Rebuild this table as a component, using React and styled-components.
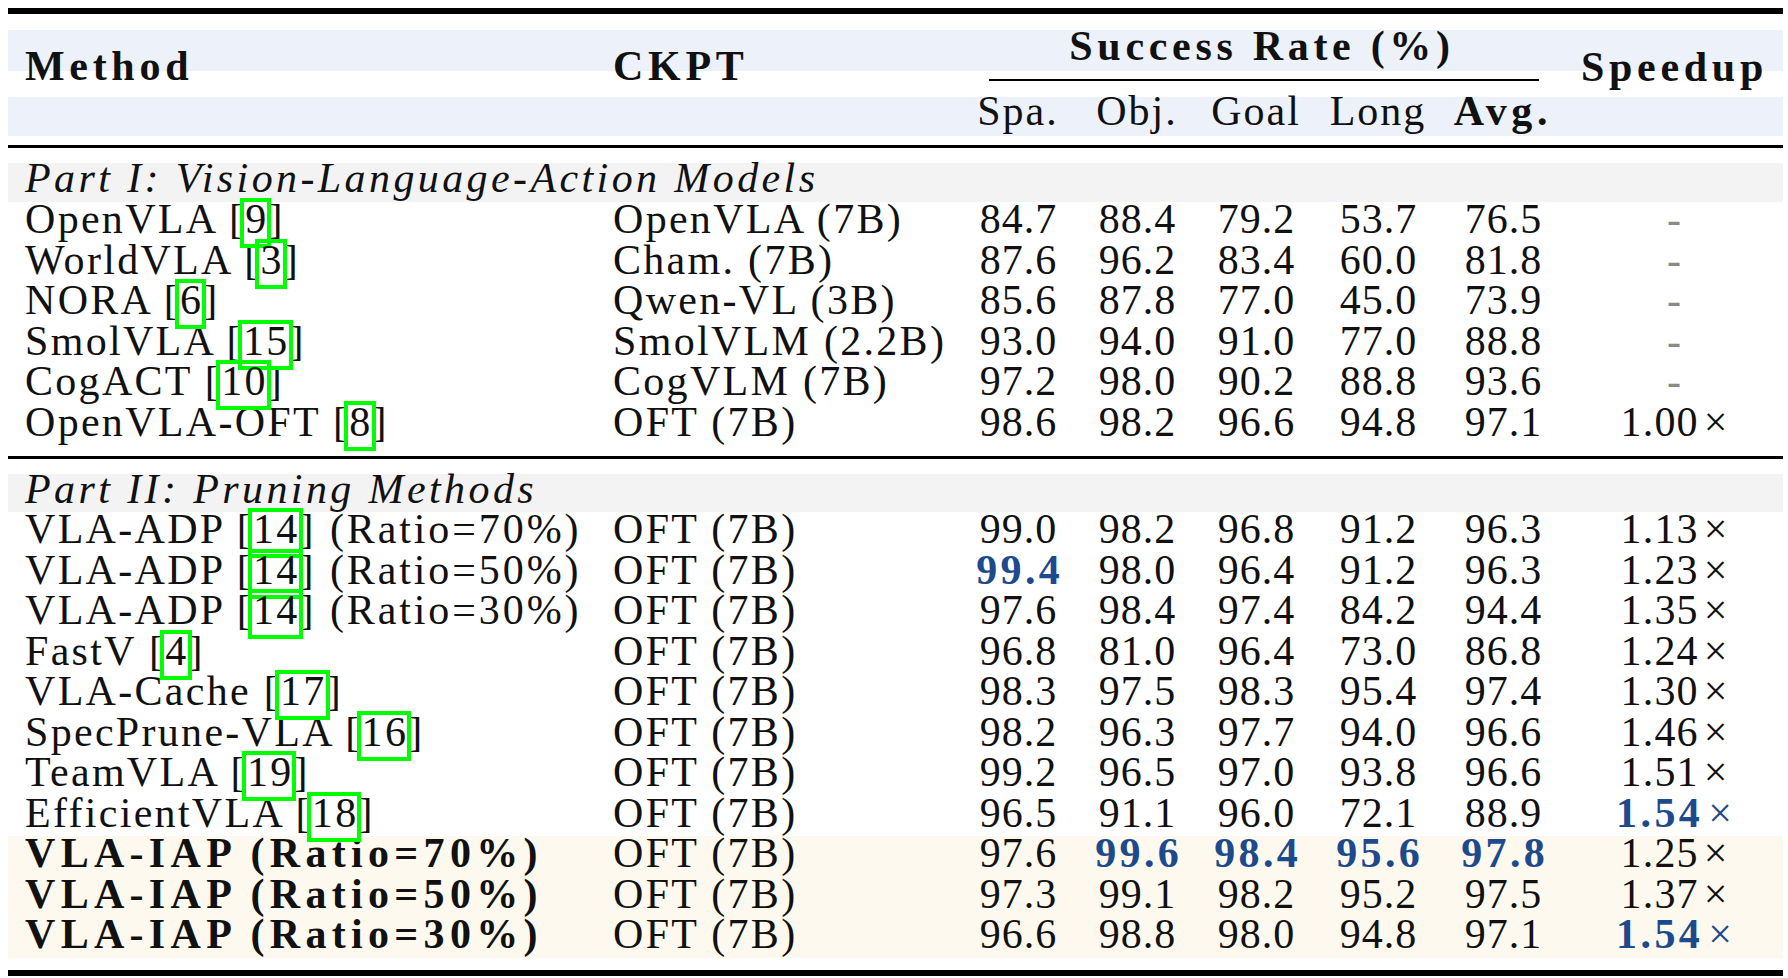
import React from 'react';
import styled, { createGlobalStyle } from 'styled-components';

const GlobalStyle = createGlobalStyle`
  html, body {
    margin: 0;
    padding: 0;
    background: #fff;
  }
  body {
    font-family: "Liberation Serif", "Times New Roman", serif;
    color: #111;
  }
`;

const COLS = '592px 358px 120px 118px 120px 124px 126px 217px';
const BLUE = '#1d4a8c';

const Table = styled.div`
  margin: 8px 0 0 8px;
  width: 1775px;
  display: flex;
  flex-direction: column;
  font-size: 42px;
`;

const Rule = styled.div`
  height: ${(p) => p.$h}px;
  background: #000;
  margin-top: ${(p) => p.$mt || 0}px;
  margin-bottom: ${(p) => p.$mb || 0}px;
`;

const Head = styled.div`
  display: grid;
  grid-template-columns: ${COLS};
  grid-template-rows: 16px 41px 26px 39px 9px;
`;

const HeadBand = styled.div`
  grid-column: 1 / -1;
  grid-row: ${(p) => p.$row};
  background: #edf2fa;
`;

const HeadCell = styled.div`
  grid-column: ${(p) => p.$col};
  grid-row: ${(p) => p.$row};
  line-height: 31px;
  margin-top: ${(p) => p.$mt || 0}px;
  padding-left: ${(p) => p.$pl || 0}px;
  text-align: ${(p) => p.$align || 'center'};
  font-weight: ${(p) => (p.$bold ? 700 : 400)};
  letter-spacing: ${(p) => (p.$bold ? 4.7 : 2)}px;
  white-space: nowrap;
`;

const CMidRule = styled.div`
  grid-column: 3 / 8;
  grid-row: 3;
  align-self: start;
  height: 2px;
  margin: 8px 27px 0 31px;
  background: #000;
`;

const PartBand = styled.div`
  height: ${(p) => p.$h}px;
  background: #f3f3f3;
  line-height: 30.7px;
  padding-left: 17px;
  font-style: italic;
  letter-spacing: 3.4px;
  white-space: nowrap;
`;

const Rows = styled.div`
  display: flex;
  flex-direction: column;
  background: ${(p) => (p.$hl ? '#fdf9ef' : 'transparent')};
`;

const Row = styled.div`
  display: grid;
  grid-template-columns: ${COLS};
  height: 40.5px;
  line-height: 35px;
`;

const MethodCell = styled.div`
  padding-left: 17px;
  white-space: nowrap;
  font-weight: ${(p) => (p.$bold ? 700 : 400)};
  letter-spacing: ${(p) => (p.$bold ? 5.3 : 2.3)}px;
`;

const Suffix = styled.span`
  margin-left: 14px;
  letter-spacing: 2.9px;
`;

const CkptCell = styled.div`
  padding-left: 13px;
  white-space: nowrap;
  letter-spacing: 2.3px;
`;

const Num = styled.div`
  text-align: center;
  white-space: nowrap;
  font-weight: ${(p) => (p.$best ? 700 : 400)};
  color: ${(p) => (p.$best ? BLUE : 'inherit')};
  letter-spacing: ${(p) => (p.$best ? 3.4 : 1)}px;
  padding-left: ${(p) => (p.$best ? 3.4 : 1)}px;
`;

const SpeedCell = styled.div`
  text-align: center;
  white-space: nowrap;
  letter-spacing: 1px;
  color: ${(p) => (p.$best ? BLUE : 'inherit')};
`;

const SpeedValue = styled.span`
  font-weight: ${(p) => (p.$best ? 700 : 400)};
  letter-spacing: ${(p) => (p.$best ? 3.4 : 1.2)}px;
`;

const Times = styled.span`
  margin-left: 5px;
  font-weight: 400;
`;

const Dash = styled.span`
  color: #8a8a8a;
`;

const Cite = styled.span`
  position: relative;
  &::after {
    content: '';
    position: absolute;
    left: -5px;
    right: -3px;
    top: 2px;
    bottom: -6px;
    border: 4px solid #00ff00;
  }
`;

const partOne = [
  { name: 'OpenVLA', cite: '9', ckpt: 'OpenVLA (7B)', nums: ['84.7', '88.4', '79.2', '53.7', '76.5'], speed: null },
  { name: 'WorldVLA', cite: '3', ckpt: 'Cham. (7B)', nums: ['87.6', '96.2', '83.4', '60.0', '81.8'], speed: null },
  { name: 'NORA', cite: '6', ckpt: 'Qwen-VL (3B)', nums: ['85.6', '87.8', '77.0', '45.0', '73.9'], speed: null },
  { name: 'SmolVLA', cite: '15', ckpt: 'SmolVLM (2.2B)', nums: ['93.0', '94.0', '91.0', '77.0', '88.8'], speed: null },
  { name: 'CogACT', cite: '10', ckpt: 'CogVLM (7B)', nums: ['97.2', '98.0', '90.2', '88.8', '93.6'], speed: null },
  { name: 'OpenVLA-OFT', cite: '8', ckpt: 'OFT (7B)', nums: ['98.6', '98.2', '96.6', '94.8', '97.1'], speed: '1.00' },
];

// a leading "!" marks the best value in a column
const partTwo = [
  { name: 'VLA-ADP', cite: '14', suffix: '(Ratio=70%)', nums: ['99.0', '98.2', '96.8', '91.2', '96.3'], speed: '1.13' },
  { name: 'VLA-ADP', cite: '14', suffix: '(Ratio=50%)', nums: ['!99.4', '98.0', '96.4', '91.2', '96.3'], speed: '1.23' },
  { name: 'VLA-ADP', cite: '14', suffix: '(Ratio=30%)', nums: ['97.6', '98.4', '97.4', '84.2', '94.4'], speed: '1.35' },
  { name: 'FastV', cite: '4', nums: ['96.8', '81.0', '96.4', '73.0', '86.8'], speed: '1.24' },
  { name: 'VLA-Cache', cite: '17', nums: ['98.3', '97.5', '98.3', '95.4', '97.4'], speed: '1.30' },
  { name: 'SpecPrune-VLA', cite: '16', nums: ['98.2', '96.3', '97.7', '94.0', '96.6'], speed: '1.46' },
  { name: 'TeamVLA', cite: '19', nums: ['99.2', '96.5', '97.0', '93.8', '96.6'], speed: '1.51' },
  { name: 'EfficientVLA', cite: '18', nums: ['96.5', '91.1', '96.0', '72.1', '88.9'], speed: '!1.54' },
];

const ours = [
  { name: 'VLA-IAP (Ratio=70%)', bold: true, nums: ['97.6', '!99.6', '!98.4', '!95.6', '!97.8'], speed: '1.25' },
  { name: 'VLA-IAP (Ratio=50%)', bold: true, nums: ['97.3', '99.1', '98.2', '95.2', '97.5'], speed: '1.37' },
  { name: 'VLA-IAP (Ratio=30%)', bold: true, nums: ['96.6', '98.8', '98.0', '94.8', '97.1'], speed: '!1.54' },
];

function Speed({ value }) {
  if (!value) {
    return (
      <SpeedCell>
        <Dash>-</Dash>
      </SpeedCell>
    );
  }
  const best = value.startsWith('!');
  return (
    <SpeedCell $best={best}>
      <SpeedValue $best={best}>{value.replace('!', '')}</SpeedValue>
      <Times>×</Times>
    </SpeedCell>
  );
}

function DataRow({ row }) {
  return (
    <Row>
      <MethodCell $bold={row.bold}>
        {row.name}
        {row.cite && (
          <>
            {' ['}
            <Cite>{row.cite}</Cite>
            {']'}
          </>
        )}
        {row.suffix && <Suffix>{row.suffix}</Suffix>}
      </MethodCell>
      <CkptCell>{row.ckpt || 'OFT (7B)'}</CkptCell>
      {row.nums.map((n, i) => (
        <Num key={i} $best={n.startsWith('!')}>
          {n.replace('!', '')}
        </Num>
      ))}
      <Speed value={row.speed} />
    </Row>
  );
}

export default function App() {
  return (
    <>
      <GlobalStyle />
      <Table>
        <Rule $h={6} />
        <Head>
          <HeadBand $row={2} />
          <HeadBand $row={4} />
          <HeadCell $col={1} $row="2 / 5" $mt={21} $pl={17} $align="left" $bold>
            Method
          </HeadCell>
          <HeadCell $col={2} $row="2 / 5" $mt={21} $pl={13} $align="left" $bold>
            CKPT
          </HeadCell>
          <HeadCell $col="3 / 8" $row={2} $mt={1} $bold>
            Success Rate (%)
          </HeadCell>
          <HeadCell $col={8} $row="2 / 5" $mt={22} $bold>
            Speedup
          </HeadCell>
          <CMidRule />
          <HeadCell $col={3} $row={4} $mt={-1}>Spa.</HeadCell>
          <HeadCell $col={4} $row={4} $mt={-1}>Obj.</HeadCell>
          <HeadCell $col={5} $row={4} $mt={-1}>Goal</HeadCell>
          <HeadCell $col={6} $row={4} $mt={-1}>Long</HeadCell>
          <HeadCell $col={7} $row={4} $mt={-1} $bold>Avg.</HeadCell>
        </Head>
        <Rule $h={3} $mb={15} />
        <PartBand $h={39}>Part I: Vision-Language-Action Models</PartBand>
        <Rows>
          {partOne.map((r, i) => (
            <DataRow key={i} row={r} />
          ))}
        </Rows>
        <Rule $h={3} $mt={11} $mb={15} />
        <PartBand $h={38}>Part II: Pruning Methods</PartBand>
        <Rows>
          {partTwo.map((r, i) => (
            <DataRow key={i} row={r} />
          ))}
        </Rows>
        <Rows $hl>
          {ours.map((r, i) => (
            <DataRow key={i} row={r} />
          ))}
        </Rows>
        <Rule $h={6} $mt={12} />
      </Table>
    </>
  );
}
